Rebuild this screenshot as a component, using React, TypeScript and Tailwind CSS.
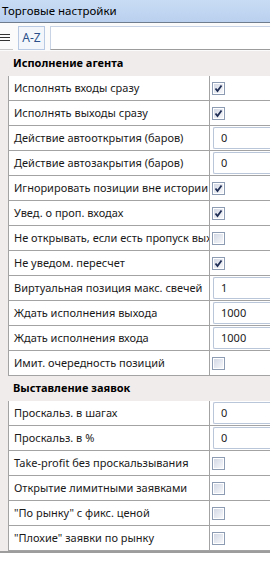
import React from "react";

type Row =
  | { label: string; kind: "check"; checked: boolean }
  | { label: string; kind: "text"; value: string };

const agentRows: Row[] = [
  { label: "Исполнять входы сразу", kind: "check", checked: true },
  { label: "Исполнять выходы сразу", kind: "check", checked: true },
  { label: "Действие автооткрытия (баров)", kind: "text", value: "0" },
  { label: "Действие автозакрытия (баров)", kind: "text", value: "0" },
  { label: "Игнорировать позиции вне истории", kind: "check", checked: true },
  { label: "Увед. о проп. входах", kind: "check", checked: true },
  { label: "Не открывать, если есть пропуск выхода", kind: "check", checked: false },
  { label: "Не уведом. пересчет", kind: "check", checked: true },
  { label: "Виртуальная позиция макс. свечей", kind: "text", value: "1" },
  { label: "Ждать исполнения выхода", kind: "text", value: "1000" },
  { label: "Ждать исполнения входа", kind: "text", value: "1000" },
  { label: "Имит. очередность позиций", kind: "check", checked: false },
];

const orderRows: Row[] = [
  { label: "Проскальз. в шагах", kind: "text", value: "0" },
  { label: "Проскальз. в %", kind: "text", value: "0" },
  { label: "Take-profit без проскальзывания", kind: "check", checked: false },
  { label: "Открытие лимитными заявками", kind: "check", checked: false },
  { label: "\"По рынку\" с фикс. ценой", kind: "check", checked: false },
  { label: "\"Плохие\" заявки по рынку", kind: "check", checked: false },
];

const CheckBox: React.FC<{ checked: boolean }> = ({ checked }) => (
  <div className="w-[13px] h-[13px] border border-[#8d9cb3] p-px bg-white">
    <div className="w-full h-full bg-gradient-to-br from-[#d3d9e5] to-[#f6f7fa] relative">
      {checked && (
        <svg width="11" height="11" viewBox="0 0 11 11" className="absolute -top-px -left-px">
          <path d="M2.5 5.5 L4.5 8 L8.5 2.5" stroke="#1f2d55" strokeWidth="1.8" fill="none" />
        </svg>
      )}
    </div>
  </div>
);

const PropRow: React.FC<{ row: Row }> = ({ row }) => (
  <div className="flex h-[25px] border-b border-[#a3a3a3] bg-white">
    <div className="w-[201px] shrink-0 pl-[5px] flex items-center overflow-hidden whitespace-nowrap border-r border-[#a3a3a3] text-[11px] text-[#1a1a1a]">
      {row.label}
    </div>
    <div className="flex-1 flex items-center pl-[2px]">
      {row.kind === "check" ? (
        <CheckBox checked={row.checked} />
      ) : (
        <div className="w-full h-[22px] ml-px border border-r-0 border-[#b9c5d8] rounded-l-[2px] flex items-center pl-[7px] text-[11px] text-[#1a1a1a]">
          {row.value}
        </div>
      )}
    </div>
  </div>
);

const Section: React.FC<{ title: string; rows: Row[] }> = ({ title, rows }) => (
  <>
    <div className="h-[25px] flex items-center pl-[13px] font-bold text-[11px] text-black">
      {title}
    </div>
    <div className="ml-[8px] border-l border-[#a3a3a3]">
      {rows.map((r) => (
        <PropRow key={r.label} row={r} />
      ))}
    </div>
  </>
);

export default function App() {
  return (
    <div
      className="w-[270px] h-[567px] overflow-hidden bg-white flex flex-col"
      style={{ fontFamily: '"Noto Sans", "Open Sans", sans-serif' }}
    >
      {/* title bar */}
      <div className="h-[23px] shrink-0 bg-gradient-to-b from-[#c9dcf5] to-[#b9d0ee] border-b border-[#6f7c8e] flex items-center pl-[2px] text-[11.5px] text-black">
        Торговые настройки
      </div>

      {/* toolbar */}
      <div className="h-[28px] shrink-0 flex items-center gap-[5px] pt-[3px] pb-px bg-[#fbfbfb]">
        <div className="w-[13px] h-[24px] flex flex-col justify-center gap-[2px] border-b border-[#c9c9c9]">
          <div className="h-px w-[10px] bg-[#333]" />
          <div className="h-px w-[10px] bg-[#333]" />
          <div className="h-px w-[10px] bg-[#333]" />
        </div>
        <div className="w-[27px] h-[24px] border border-[#b7c9e3] bg-[#f3f7fc] flex items-center justify-center text-[12px] text-[#2a4f8a]">
          A-Z
        </div>
        <div className="flex-1 h-[24px] border border-[#c8d4e6] border-b-[#9c9c9c] border-r-0 bg-white" />
      </div>

      {/* property grid */}
      <div className="bg-[#f1ecec] border-b-2 border-[#9d9d9d] shrink-0">
        <Section title="Исполнение агента" rows={agentRows} />
        <Section title="Выставление заявок" rows={orderRows} />
      </div>
      <div className="flex-1 bg-white" />
    </div>
  );
}
